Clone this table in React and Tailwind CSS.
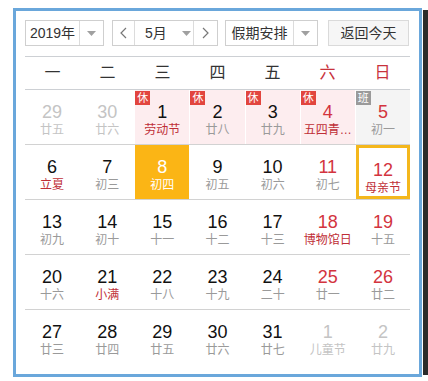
import React from 'react';

const FONT = { fontFamily: '"Liberation Sans", "Noto Sans CJK SC", sans-serif' };

const weeks = [
  [
    { d: 29, l: '廿五', out: true },
    { d: 30, l: '廿六', out: true },
    { d: 1, l: '劳动节', fest: true, bg: 'rest' },
    { d: 2, l: '廿八', bg: 'rest' },
    { d: 3, l: '廿九', bg: 'rest' },
    { d: 4, l: '五四青…', fest: true, bg: 'rest' },
    { d: 5, l: '初一', bg: 'work' },
  ],
  [
    { d: 6, l: '立夏', fest: true },
    { d: 7, l: '初三' },
    { d: 8, l: '初四', today: true },
    { d: 9, l: '初五' },
    { d: 10, l: '初六' },
    { d: 11, l: '初七' },
    { d: 12, l: '母亲节', fest: true, picked: true },
  ],
  [
    { d: 13, l: '初九' },
    { d: 14, l: '初十' },
    { d: 15, l: '十一' },
    { d: 16, l: '十二' },
    { d: 17, l: '十三' },
    { d: 18, l: '博物馆日', fest: true },
    { d: 19, l: '十五' },
  ],
  [
    { d: 20, l: '十六' },
    { d: 21, l: '小满', fest: true },
    { d: 22, l: '十八' },
    { d: 23, l: '十九' },
    { d: 24, l: '二十' },
    { d: 25, l: '廿一' },
    { d: 26, l: '廿二' },
  ],
  [
    { d: 27, l: '廿三' },
    { d: 28, l: '廿四' },
    { d: 29, l: '廿五' },
    { d: 30, l: '廿六' },
    { d: 31, l: '廿七' },
    { d: 1, l: '儿童节', out: true },
    { d: 2, l: '廿九', out: true },
  ],
];

const Caret = () => (
  <svg width="9" height="5" viewBox="0 0 9 5">
    <path d="M0 0h9L4.5 5z" fill="#a0a0a0" />
  </svg>
);

const Chevron = ({ dir }) => (
  <svg width="7" height="12" viewBox="0 0 7 12">
    <path
      d={dir === 'left' ? 'M6 1L1 6l5 5' : 'M1 1l5 5-5 5'}
      fill="none"
      stroke="#777"
      strokeWidth="1.2"
    />
  </svg>
);

const DayCell = ({ cell, col }) => {
  const weekend = col >= 5;
  let numColor = weekend ? 'text-[#d3343e]' : 'text-[#111]';
  let lunarColor = cell.fest ? 'text-[#bf2f37]' : 'text-[#9a9a9a]';
  if (cell.out) {
    numColor = 'text-[#c4c4c4]';
    lunarColor = 'text-[#c4c4c4]';
  }
  let bg = '';
  if (cell.bg === 'rest') bg = 'bg-[#fdedef]';
  if (cell.bg === 'work') bg = 'bg-[#f4f4f4]';
  if (cell.today) {
    bg = 'bg-[#fbb515]';
    numColor = 'text-white';
    lunarColor = 'text-white';
  }

  return (
    <div
      className={`relative flex flex-col items-center pt-[12px] h-full ${bg} ${
        cell.picked ? 'border-[3px] border-[#f4b71c] pt-[9px]' : ''
      }`}
    >
      {cell.bg && (
        <span
          className={`absolute left-0 top-px w-[15px] h-[14px] flex items-center justify-center text-[11px] leading-none text-white ${
            cell.bg === 'rest' ? 'bg-[#e2453e]' : 'bg-[#9a9a9a]'
          }`}
        >
          {cell.bg === 'rest' ? '休' : '班'}
        </span>
      )}
      <span className={`text-[18px] leading-[20px] ${numColor}`}>{cell.d}</span>
      <span className={`text-[12px] leading-[16px] whitespace-nowrap ${lunarColor}`}>{cell.l}</span>
    </div>
  );
};

const App = () => {
  const weekdays = ['一', '二', '三', '四', '五', '六', '日'];

  return (
    <div className="w-[428px] h-[381px] bg-white flex items-start pt-[8px] pl-[13px]" style={FONT}>
      <div className="w-[409px] h-[369px] border-[3px] border-[#6aa7db] px-[9px] pt-[9px]">
        {/* Toolbar */}
        <div className="flex items-center h-[26px] text-[14px] text-[#333]">
          <div className="flex h-full w-[79px] border border-[#cfcfcf]">
            <div className="flex-1 flex items-center justify-center">2019年</div>
            <div className="w-[24px] flex items-center justify-center border-l border-[#dcdcdc]">
              <Caret />
            </div>
          </div>

          <div className="flex h-full w-[106px] ml-[8px] border border-[#cfcfcf]">
            <div className="w-[22px] flex items-center justify-center border-r border-[#dcdcdc]">
              <Chevron dir="left" />
            </div>
            <div className="flex-1 flex items-center pl-[10px] gap-[15px]">
              <span>5月</span>
              <Caret />
            </div>
            <div className="w-[24px] flex items-center justify-center border-l border-[#dcdcdc]">
              <Chevron dir="right" />
            </div>
          </div>

          <div className="flex h-full w-[93px] ml-[7px] border border-[#cfcfcf]">
            <div className="flex-1 flex items-center justify-center">假期安排</div>
            <div className="w-[24px] flex items-center justify-center border-l border-[#dcdcdc]">
              <Caret />
            </div>
          </div>

          <div className="flex h-full w-[81px] ml-[10px] items-center justify-center border border-[#dadada] bg-[#f6f6f6]">
            返回今天
          </div>
        </div>

        {/* Weekday header */}
        <div className="mt-[10px] w-[385px] h-[34px] border-t border-b border-[#cdd0d4] grid grid-cols-7 items-center text-[16px]">
          {weekdays.map((w, i) => (
            <div key={w} className={`text-center ${i >= 5 ? 'text-[#c8323c]' : 'text-[#333]'}`}>
              {w}
            </div>
          ))}
        </div>

        {/* Days */}
        <div className="w-[385px]">
          {weeks.map((week, r) => (
            <div
              key={r}
              className={`grid grid-cols-7 gap-x-px h-[55px] ${
                r < weeks.length - 1 ? 'border-b border-[#d2d2d2]' : ''
              }`}
            >
              {week.map((cell, c) => (
                <DayCell key={c} cell={cell} col={c} />
              ))}
            </div>
          ))}
        </div>
      </div>
      <div className="ml-px mt-[2px] w-[5px] h-[365px] bg-[#2b2b2b]" />
    </div>
  );
};

export default App;
